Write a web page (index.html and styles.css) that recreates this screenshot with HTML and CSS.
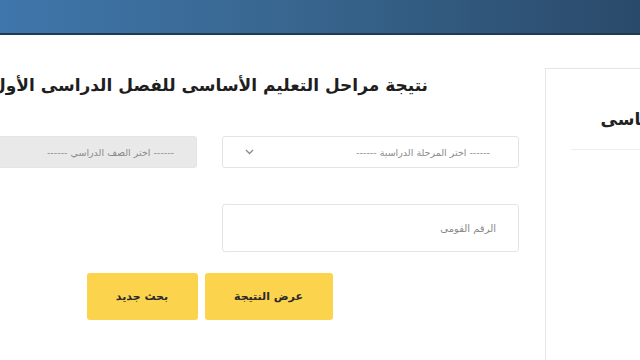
FILE: index.html
```html
<!DOCTYPE html>
<html lang="ar" dir="rtl">
<head>
    <meta charset="UTF-8">
    <meta name="viewport" content="width=device-width, initial-scale=1.0">
    <link rel="stylesheet" href="styles.css">
    <title>نتيجة مراحل التعليم الأساسى</title>
</head>
<body>
    <header class="topBar"></header>

    <div class="page">
        <aside class="sideCard">
            <h2 class="sideTitle">التعليم الأساسى</h2>
        </aside>

        <main class="resultCard">
            <h1 class="resultTitle">نتيجة مراحل التعليم الأساسى للفصل الدراسى الأول</h1>

            <div class="formGrid">
                <div class="selectBox">
                    <span>------ اختر المرحلة الدراسية ------</span>
                    <svg class="chevron" width="9" height="6" viewBox="0 0 9 6">
                        <path d="M1 1l3.5 3.5L8 1" fill="none" stroke="#8a8a8a" stroke-width="1.3"/>
                    </svg>
                </div>
                <div class="selectBox selectDisabled">
                    <span>------ اختر الصف الدراسي ------</span>
                </div>
                <input type="text" class="nationalId" placeholder="الرقم القومى">
            </div>

            <div class="actions">
                <button class="yellowBtn showBtn">عرض النتيجة</button>
                <button class="yellowBtn newBtn">بحث جديد</button>
            </div>
        </main>
    </div>
</body>
</html>
```

FILE: styles.css
```css
html,
body {
    overflow: hidden;
}

body {
    margin: 0;
    background-color: #ffffff;
    font-family: "DejaVu Sans", "Noto Sans", sans-serif;
    color: #222222;
}

.topBar {
    height: 33px;
    background: linear-gradient(90deg, #3f76ab 0%, #38668f 45%, #2a4a6a 100%);
    border-bottom: 2px solid #1f3a55;
}

/* wider than the window: the screenshot is a crop of a bigger page */
.page {
    display: flex;
    gap: 15px;
    width: 874px;
    margin: 33px -123px 0 0;
}

.sideCard {
    width: 218px;
    height: 300px;
    padding: 0 25px;
    box-sizing: border-box;
    border-top: 1px solid #e6e6e6;
    border-left: 1px solid #e6e6e6;
}

.sideTitle {
    margin: 0;
    padding: 38px 0 18px;
    font-size: 17px;
    line-height: 24px;
    border-bottom: 1px solid #eeeeee;
}

.resultCard {
    width: 641px;
    padding: 5px 11px 0;
    box-sizing: border-box;
}

.resultTitle {
    margin: 0 0 39px;
    text-align: center;
    font-size: 17px;
    line-height: 24px;
    color: #1e1e1e;
}

.formGrid {
    display: grid;
    grid-template-columns: 1fr 1fr;
    column-gap: 25px;
    row-gap: 36px;
}

.selectBox {
    display: flex;
    align-items: center;
    justify-content: space-between;
    height: 32px;
    padding: 0 28px 0 22px;
    box-sizing: border-box;
    border: 1px solid #e4e4e4;
    border-radius: 3px;
    font-size: 9.5px;
    color: #8a8a8a;
}

.selectDisabled {
    background-color: #e9e9e9;
    padding-right: 22px;
}

.nationalId {
    height: 48px;
    padding: 0 22px;
    box-sizing: border-box;
    border: 1px solid #e4e4e4;
    border-radius: 3px;
    font-family: inherit;
    font-size: 10px;
}

.nationalId::placeholder {
    color: #8a8a8a;
}

.actions {
    display: flex;
    justify-content: center;
    gap: 7px;
    margin-top: 21px;
}

.yellowBtn {
    height: 47px;
    border: none;
    border-radius: 3px;
    background-color: #fcd34d;
    font-family: inherit;
    font-size: 11px;
    font-weight: bold;
    color: #2a2a2a;
}

.showBtn {
    width: 128px;
}

.newBtn {
    width: 111px;
}
```
